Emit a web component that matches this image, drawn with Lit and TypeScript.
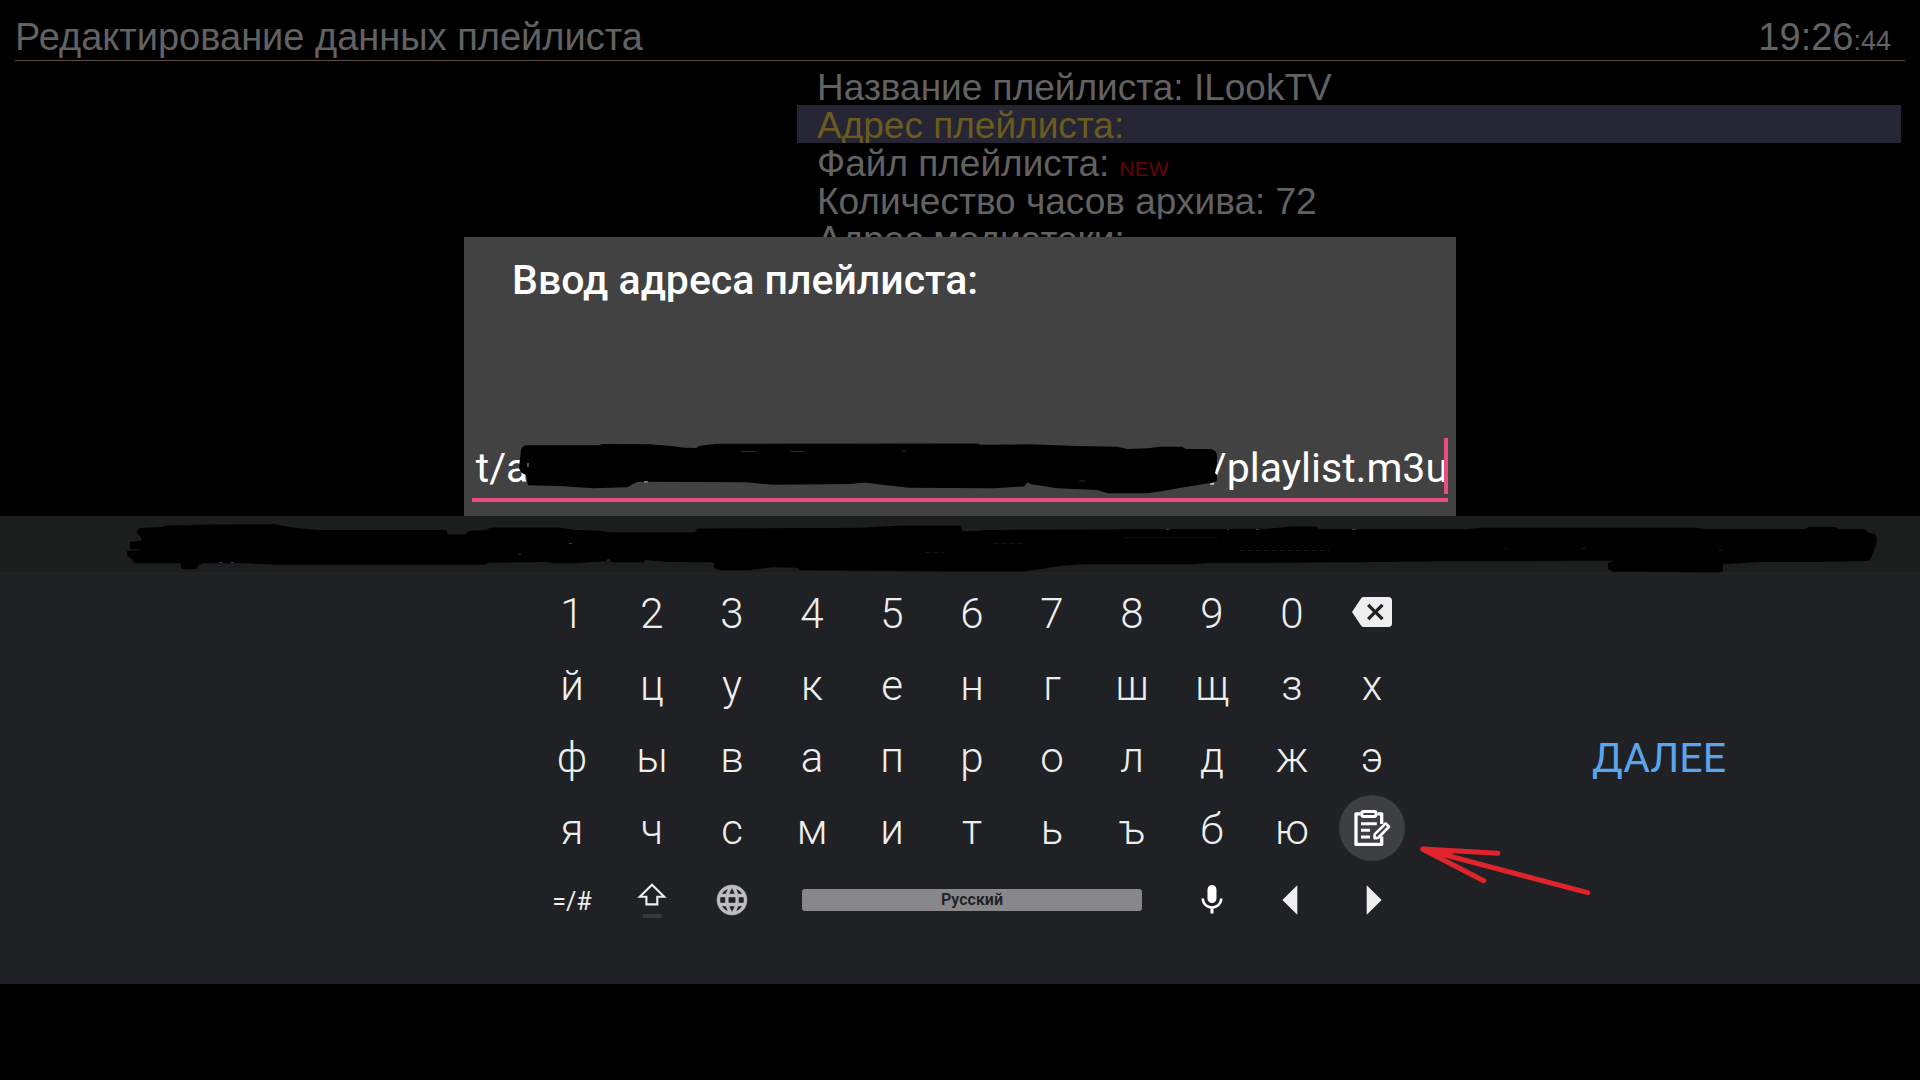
import { LitElement, html, css, svg, nothing, TemplateResult } from "lit";
import { customElement, property, state } from "lit/decorators.js";
import { classMap } from "lit/directives/class-map.js";

interface SettingRow {
  label: string;
  value?: string;
  badge?: string;
}

const ROWS: SettingRow[] = [
  { label: "Название плейлиста:", value: "ILookTV" },
  { label: "Адрес плейлиста:" },
  { label: "Файл плейлиста:", badge: "NEW" },
  { label: "Количество часов архива:", value: "72" },
  { label: "Адрес медиатеки:" },
];

const LETTER_ROWS = ["1234567890", "йцукенгшщзх", "фывапролджэ", "ячсмитьъбю"];

/* The middle of the address is blank: it is painted over. */
const ADDRESS = "t/a" + "\u00a0".repeat(67) + "/playlist.m3u";

const ICONS = {
  backspace: svg`<svg class="icon" viewBox="0 0 24 24" aria-hidden="true"><path fill="currentColor" d="M22 3H7c-.69 0-1.23.35-1.59.88L0 12l5.41 8.11c.36.53.9.89 1.59.89h15c1.1 0 2-.9 2-2V5c0-1.1-.9-2-2-2zm-3 12.59L17.59 17 14 13.41 10.41 17 9 15.59 12.59 12 9 8.41 10.41 7 14 10.59 17.59 7 19 8.41 15.41 12 19 15.59z"/></svg>`,
  clipboard: svg`<svg class="icon" viewBox="0 0 40 40" aria-hidden="true"><g fill="none" stroke="#fff" stroke-width="3.3" stroke-linejoin="round">
    <path d="M8.5 5.8H4V36.4H29.7V28.5M25.5 5.8H29.7V16"/>
    <rect x="9.8" y="3.4" width="14.2" height="5" rx="1.6" stroke-width="3"/>
    <path d="M9 15.7H24.8M9 22.3H18M9 29H18" stroke-width="3"/>
    <path d="M22.6 30.2V26.4L33.6 15.5L37 18.8L26.2 29.8Z" stroke-width="2.7"/></g></svg>`,
  shift: svg`<svg class="icon" viewBox="0 0 40 40" aria-hidden="true"><path fill="none" stroke="currentColor" stroke-width="2.1" d="M20 4.8L7.8 16.7H14.4V24.4H25.3V16.7H32.2Z"/><rect x="10.7" y="34" width="19" height="4" rx="1" fill="#37383b"/></svg>`,
  globe: svg`<svg class="icon icon-small icon-dim" viewBox="0 0 24 24" aria-hidden="true"><path fill="currentColor" stroke="currentColor" stroke-width=".3" d="M11.99 2C6.47 2 2 6.48 2 12s4.47 10 9.99 10C17.52 22 22 17.52 22 12S17.52 2 11.99 2zm6.93 6h-2.95c-.32-1.25-.78-2.45-1.38-3.56 1.84.63 3.37 1.91 4.33 3.56zM12 4.04c.83 1.2 1.48 2.53 1.91 3.96h-3.82c.43-1.43 1.08-2.76 1.91-3.96zM4.26 14C4.1 13.36 4 12.69 4 12s.1-1.36.26-2h3.38c-.08.66-.14 1.32-.14 2 0 .68.06 1.34.14 2H4.26zm.82 2h2.95c.32 1.25.78 2.45 1.38 3.56-1.84-.63-3.37-1.9-4.33-3.56zm2.95-8H5.08c.96-1.66 2.49-2.93 4.33-3.56C8.81 5.55 8.35 6.75 8.03 8zM12 19.96c-.83-1.2-1.48-2.53-1.91-3.96h3.82c-.43 1.43-1.08 2.76-1.91 3.96zM14.34 14H9.66c-.09-.66-.16-1.32-.16-2 0-.68.07-1.35.16-2h4.68c.09.65.16 1.32.16 2 0 .68-.07 1.34-.16 2zm.25 5.56c.6-1.11 1.06-2.31 1.38-3.56h2.95c-.96 1.65-2.49 2.93-4.33 3.56zM16.36 14c.08-.66.14-1.32.14-2 0-.68-.06-1.34-.14-2h3.38c.16.64.26 1.31.26 2s-.1 1.36-.26 2h-3.38z"/></svg>`,
  mic: svg`<svg class="icon icon-small" viewBox="0 0 24 24" aria-hidden="true"><path fill="#fff" d="M12 14c1.66 0 2.99-1.34 2.99-3L15 5c0-1.66-1.34-3-3-3S9 3.34 9 5v6c0 1.66 1.34 3 3 3zm5.3-3c0 3-2.54 5.1-5.3 5.1S6.7 14 6.7 11H5c0 3.41 2.72 6.23 6 6.72V21h2v-3.28c3.28-.48 6-3.3 6-6.72h-1.7z"/></svg>`,
  left: svg`<svg class="icon" viewBox="0 0 40 40" aria-hidden="true"><path fill="currentColor" d="M10.3 20L25.3 5.3V34.7Z"/></svg>`,
  right: svg`<svg class="icon" viewBox="0 0 40 40" aria-hidden="true"><path fill="currentColor" d="M29.7 20L14.7 5.3V34.7Z"/></svg>`,
};

@customElement("playlist-settings")
export class PlaylistSettings extends LitElement {
  @property({ type: Number }) selected = 1;

  static styles = css`
    :host {
      display: block;
      font-family: "Liberation Sans", Arial, sans-serif;
      color: #626262;
    }
    .header {
      display: flex;
      justify-content: space-between;
      margin: 0 15px;
      padding: 14px 14px 0 0;
      border-bottom: 1px solid #5c4b3e;
    }
    .title,
    .clock {
      margin: 0;
      font-size: 38px;
      font-weight: 400;
      line-height: 46px;
      white-space: nowrap;
    }
    .seconds {
      font-size: 27px;
      line-height: 27px;
    }
    .list {
      list-style: none;
      margin: 6px 19px 0 auto;
      padding: 0;
      width: 57.5%;
    }
    .row {
      box-sizing: border-box;
      height: 38px;
      padding: 4px 0 0 20px;
      overflow: hidden;
      font-size: 37px;
      line-height: 34px;
      white-space: nowrap;
    }
    .row.selected {
      background: #262533;
      color: #6b5b20;
    }
    .badge {
      color: #640404;
      font-size: 21px;
      line-height: 21px;
    }
  `;

  render() {
    return html`
      <header class="header">
        <h1 class="title">Редактирование данных плейлиста</h1>
        <time class="clock">19:26<span class="seconds">:44</span></time>
      </header>
      <ul class="list">
        ${ROWS.map(
          (row, i) => html`<li class=${classMap({ row: true, selected: i === this.selected })}>
            ${row.label} ${row.value ?? nothing}${row.badge ? html`<span class="badge">${row.badge}</span>` : nothing}
          </li>`
        )}
      </ul>
    `;
  }
}

@customElement("address-dialog")
export class AddressDialog extends LitElement {
  @state() private value = ADDRESS;

  static styles = css`
    :host {
      display: block;
      font-family: Roboto, "Noto Sans", sans-serif;
    }
    .dialog {
      box-sizing: border-box;
      display: flex;
      flex-direction: column;
      justify-content: space-between;
      min-height: 279px;
      padding: 19px 8px 14px;
      background: #424242;
      color: #fff;
    }
    .label {
      padding-left: 40px;
      font-size: 41px;
      font-weight: 500;
      line-height: 48px;
    }
    .field {
      position: relative;
    }
    .input {
      box-sizing: border-box;
      display: block;
      width: 100%;
      height: 64px;
      margin: 0;
      padding: 0;
      border: 0;
      border-bottom: 4px solid #ea4c80;
      border-radius: 0;
      outline: 0;
      background: none;
      color: inherit;
      font: 400 41px/60px Roboto, "Noto Sans", sans-serif;
      text-align: right;
    }
    .caret {
      position: absolute;
      top: 0;
      right: 0;
      width: 4px;
      height: 56px;
      background: #ea4c80;
    }
    .marker {
      position: absolute;
      inset: 0;
      width: 100%;
      height: 64px;
      pointer-events: none;
    }
  `;

  render() {
    return html`
      <section class="dialog" role="dialog" aria-labelledby="label">
        <label class="label" id="label" for="address">Ввод адреса плейлиста:</label>
        <div class="field">
          <input
            class="input"
            id="address"
            type="text"
            .value=${this.value}
            @input=${(e: Event) => (this.value = (e.target as HTMLInputElement).value)}
          />
          <span class="caret"></span>
          <svg class="marker" viewBox="472 438 976 64" preserveAspectRatio="none" aria-hidden="true">
            <path
              d="M519 468L521 450Q522 445.5 527 445.3H599L603 444L650 444.3L671 446L685 447.7L696 448L700 445.7L717 443.7L978 443.4L981 444.8L1030 444.3L1077 446L1117 446.7L1127 449L1148 448.3L1160 446.7H1182L1186 449H1211Q1217 450 1217 457V463L1215 473L1217 475V480Q1216 483 1207 483.6L1178 488.3L1163 491L1147 493.3H1108L1097 490L1057 488.3L1030 484L1028 482L1024 486.5L993 488.3L909 487.8L884 485L865 482.4L850 484L773 484.7L746 482.3L647 481.7L637 482L627 487.3L593 488.3L560 486L528 485.3L526 475Q520 473 519 468Z"
            />
            <path d="M741 451.5H757M790 451.5H804M902 451.5H906M1079 481H1085" stroke="#2a2a2a" stroke-width="1" />
            <path d="M528 463V467M644 481.8H648M1210 484H1214" stroke="#aaa" stroke-width="1" />
          </svg>
        </div>
      </section>
    `;
  }
}

@customElement("screen-keyboard")
export class ScreenKeyboard extends LitElement {
  static styles = css`
    :host {
      display: block;
      font-family: Roboto, "Noto Sans", sans-serif;
      color: #eeeeee;
    }
    .suggestions {
      height: 56px;
      background: #1c1e1e;
    }
    .marker {
      display: block;
      width: 100%;
      height: 56px;
      overflow: visible;
    }
    .pad {
      display: grid;
      grid-template-columns: 532fr 880fr 508fr;
      padding: 4px 0 48px;
      background: #202124;
    }
    .keys {
      grid-column: 2;
      display: grid;
      grid-template-columns: repeat(11, 1fr);
      grid-auto-rows: 72px;
      justify-items: center;
      align-items: center;
    }
    button {
      display: grid;
      place-items: center;
      margin: 0;
      padding: 0;
      border: 0;
      background: none;
      color: inherit;
      font-family: inherit;
      cursor: pointer;
    }
    .key {
      width: 66px;
      height: 66px;
      border-radius: 50%;
    }
    .key.letter {
      padding-top: 3px;
      font-size: 42px;
      font-weight: 300;
      line-height: 60px;
    }
    .key.symbols {
      padding-top: 3px;
      font-size: 25px;
      font-weight: 400;
      line-height: 60px;
    }
    .key.focused {
      background: #3e3f42;
    }
    .space {
      grid-column: span 5;
      width: 85%;
      height: 22px;
      border-radius: 3px;
      background: #88888a;
      color: #202124;
      font-size: 16px;
      font-weight: 600;
      line-height: 22px;
    }
    .icon {
      display: block;
      width: 40px;
      height: 40px;
    }
    .icon-small {
      width: 36px;
      height: 36px;
    }
    .icon-dim {
      color: #bebec0;
    }
    .side {
      position: relative;
      display: grid;
      grid-template-rows: repeat(5, 72px);
    }
    .next {
      grid-row: 3;
      justify-self: center;
      padding: 3px 14px 0 0;
      color: #5aa5ee;
      font-size: 41px;
      font-weight: 400;
      line-height: 60px;
    }
    .pointer {
      position: absolute;
      top: 264px;
      left: 0;
      width: 188px;
      height: 60px;
      pointer-events: none;
    }
  `;

  private key(content: unknown, label?: string, extra: Record<string, boolean> = {}): TemplateResult {
    return html`<button class=${classMap({ key: true, ...extra })} type="button" aria-label=${label ?? nothing}>${content}</button>`;
  }

  render() {
    const rowEnds = [this.key(ICONS.backspace, "Удалить"), nothing, nothing, this.key(ICONS.clipboard, "Вставить", { focused: true })];
    return html`
      <div class="suggestions">
        <svg class="marker" viewBox="0 516 1920 56" preserveAspectRatio="none" aria-hidden="true">
          <path
            d="M136 532L140 528L162 527L166 525.5L215 524.5L275 524.3L292 527.5L318 530H446L448 534.5H465L469 530.7L486 530L491 527.5H559L576 530L599 530.7L611 532.3H695L697 528.5L823 528L863 527.7L901 525.6H960L963 531H978L987 530L1268 528.7L1292 526.4H1316L1319 529.3H1466L1482 527.7H1698L1705 529H1805L1809 526.7H1835L1839 529H1864L1869 533L1875 534Q1878 538 1876 545L1871 558Q1870 561 1866 561L1813 562H1759L1723 564.3V571L1720 572.3H1692L1641 571.8H1613L1608 569V563L1614 560.8L1460 561L1355 562.3L1208 563L1193 564.3H1083L1061 565.7L1043 568.7L1022 571.4H955L800 570.3L797 567.7L772 567.3L749 570.3H719L714 568V563.3L711 562.3L668 562L645 560L644 562.3H612L608 560L605 561.3L576 563.3H555L548 562L488 562.7L485 564.7H278L246 563.3H203L199 564.7L196 569.3H182L180 563.3H134L132 559L127 556V551L142 549.5L130 549V542L142 540.5L140 536Z"
          />
          <path
            d="M518 554H521M569 543.5H572M607 560H610M219 562.5H222M231 562.5H234M1166 529.5H1169M1227 529.5H1229M1256 529.5H1259M1352 529.3H1356"
            stroke="#2b415f"
            stroke-width="1"
          />
          <path
            d="M925 552.5H944M994 543.5H1027M1124 537.5H1220M1240 550.5H1330M1504 548.5H1509M1581 548.5H1586M1718 550.5H1723"
            stroke="#121820"
            stroke-width="1"
            stroke-dasharray="5 3"
          />
        </svg>
      </div>
      <div class="pad">
        <div class="keys">
          ${LETTER_ROWS.map((row, i) => html`${[...row].map((c) => this.key(c, undefined, { letter: true }))}${rowEnds[i]}`)}
          ${this.key("=/#", "Символы", { symbols: true })} ${this.key(ICONS.shift, "Регистр")}
          ${this.key(ICONS.globe, "Язык")}
          <button class="space" type="button">Русский</button>
          ${this.key(ICONS.mic, "Голосовой ввод")} ${this.key(ICONS.left, "Влево")} ${this.key(ICONS.right, "Вправо")}
        </div>
        <div class="side">
          <button class="next" type="button">ДАЛЕЕ</button>
          <svg class="pointer" viewBox="1412 840 188 60" aria-hidden="true">
            <path
              d="M1498 853.3L1422.7 849L1587.7 892.7M1422.7 849.3L1483.7 880.7M1424 849L1450 854"
              fill="none"
              stroke="#e0242b"
              stroke-width="5"
              stroke-linecap="round"
              stroke-linejoin="round"
            />
          </svg>
        </div>
      </div>
    `;
  }
}

@customElement("app-root")
export class AppRoot extends LitElement {
  static styles = css`
    :host {
      display: block;
      min-height: 100vh;
      background: #000;
    }
    .stage {
      display: grid;
      grid-template-columns: minmax(0, 1fr);
    }
    .settings,
    .dialog {
      grid-area: 1 / 1;
    }
    .dialog {
      justify-self: center;
      width: 992px;
      max-width: 100%;
      margin-top: 237px;
    }
  `;

  render() {
    return html`
      <main class="stage">
        <playlist-settings class="settings"></playlist-settings>
        <address-dialog class="dialog"></address-dialog>
      </main>
      <screen-keyboard></screen-keyboard>
    `;
  }
}
